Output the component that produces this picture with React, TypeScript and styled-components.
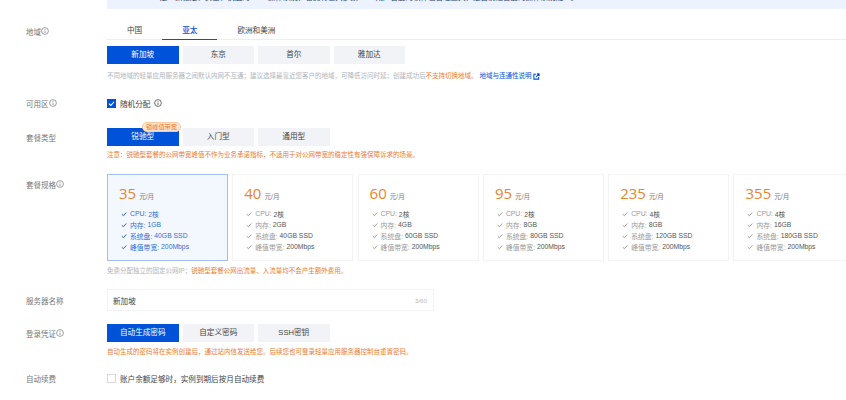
import React from "react";
import styled, { createGlobalStyle } from "styled-components";

const Global = createGlobalStyle`
  html, body { margin: 0; padding: 0; background: #fff; overflow: hidden; }
  body { font-family: "Liberation Sans", "Noto Sans CJK SC", sans-serif; color: #333; width: 846px; height: 400px; }
`;

const Page = styled.div`
  width: 846px;
  height: 400px;
  overflow: hidden;
`;
const Notice = styled.div`
  margin-left: 107px;
  height: 9px;
  background: #ecf2fe;
  overflow: hidden;
  display: flex;
  align-items: flex-end;
  padding: 0 0 6px 29px;
  box-sizing: border-box;
  font-size: 7.5px;
  line-height: 10px;
  color: #2a3f6b;
  white-space: nowrap;
`;
const Row = styled.div<{ $top: number; $h?: number }>`
  display: flex;
  margin-top: ${(p) => p.$top}px;
  ${(p) => (p.$h ? `height: ${p.$h}px; align-items: center;` : "")}
`;
const Label = styled.div<{ $lh?: number }>`
  flex: none;
  width: 81px;
  padding-left: 26px;
  font-size: 7.5px;
  color: #777;
  display: flex;
  align-items: center;
  height: ${(p) => p.$lh ?? 12}px;
`;
const Content = styled.div`
  flex: 1;
  min-width: 0;
`;
const Tabs = styled.div`
  display: flex;
  height: 18px;
  border-bottom: 1px solid #eceef1;
  box-sizing: border-box;
`;
const Tab = styled.div<{ $active?: boolean }>`
  padding: 0 20px;
  font-size: 7.6px;
  line-height: 17px;
  height: 18px;
  box-sizing: border-box;
  color: ${(p) => (p.$active ? "#0052d9" : "#444")};
  font-weight: ${(p) => (p.$active ? 500 : 400)};
  border-bottom: ${(p) => (p.$active ? "1px solid #0052d9" : "none")};
`;
const Buttons = styled.div<{ $top?: number }>`
  display: flex;
  gap: 4px;
  margin-top: ${(p) => p.$top ?? 0}px;
`;
const Btn = styled.div<{ $active?: boolean }>`
  position: relative;
  width: 71.5px;
  height: 18px;
  line-height: 18px;
  text-align: center;
  font-size: 7.6px;
  color: ${(p) => (p.$active ? "#fff" : "#444")};
  background: ${(p) => (p.$active ? "#0052d9" : "#f1f3f6")};
`;
const Badge = styled.span`
  position: absolute;
  left: 35px;
  top: -6px;
  width: 39px;
  height: 10px;
  box-sizing: border-box;
  border: 1px solid #fbc9a0;
  background: #fde3d0;
  border-radius: 6px;
  color: #ee7a22;
  font-size: 6.2px;
  line-height: 8px;
  text-align: center;
  white-space: nowrap;
`;
const Hint = styled.div<{ $top: number; $warn?: boolean }>`
  margin-top: ${(p) => p.$top}px;
  height: 10px;
  font-size: 6.5px;
  line-height: 10px;
  color: ${(p) => (p.$warn ? "#ed7b2f" : "#b0b3b8")};
  white-space: nowrap;
  display: flex;
  align-items: center;
`;
const Warn = styled.span`
  color: #ed7b2f;
`;
const LinkText = styled.span`
  color: #0052d9;
  margin-left: 2px;
  margin-right: 1px;
`;
const Check = styled.span<{ $on?: boolean }>`
  width: 9px;
  height: 9px;
  box-sizing: border-box;
  flex: none;
  display: inline-flex;
  align-items: center;
  justify-content: center;
  background: ${(p) => (p.$on ? "#0052d9" : "#fff")};
  border: 1px solid ${(p) => (p.$on ? "#0052d9" : "#d8dade")};
`;
const CheckRow = styled.div`
  display: flex;
  align-items: center;
  height: 12px;
  font-size: 7.6px;
  color: #444;
`;
const CheckText = styled.span`
  margin-left: 4px;
  margin-right: 4px;
`;
const Cards = styled.div`
  display: flex;
  gap: 4.3px;
`;
const Card = styled.div<{ $active?: boolean }>`
  flex: none;
  width: 121px;
  height: 87px;
  box-sizing: border-box;
  padding: 8px 0 0 11px;
  background: ${(p) => (p.$active ? "#f3f8ff" : "#fff")};
  border: 1px solid ${(p) => (p.$active ? "#a3bfe8" : "#f3f3f4")};
`;
const PriceLine = styled.div`
  display: flex;
  align-items: baseline;
  height: 20px;
  line-height: 20px;
`;
const Price = styled.span`
  font-family: "Open Sans", sans-serif;
  font-size: 15px;
  color: #e8842f;
`;
const Unit = styled.span`
  font-size: 6.6px;
  color: #777;
  margin-left: 3px;
`;
const Specs = styled.ul`
  list-style: none;
  margin: 5px 0 0;
  padding: 0 0 0 2px;
`;
const Spec = styled.li<{ $active?: boolean }>`
  display: flex;
  align-items: center;
  height: 11px;
  font-size: 6.8px;
  white-space: nowrap;
  color: ${(p) => (p.$active ? "#2f6fd8" : "#555")};
  & > svg { margin-right: 3px; flex: none; }
`;
const SpecKey = styled.span<{ $active?: boolean }>`
  color: ${(p) => (p.$active ? "#2f6fd8" : "#999")};
  margin-right: 2px;
`;
const InputBox = styled.div`
  width: 327px;
  height: 22px;
  box-sizing: border-box;
  border: 1px solid #f3f3f4;
  padding: 0 6px 0 5px;
  display: flex;
  align-items: center;
  justify-content: space-between;
  font-size: 7.6px;
  color: #444;
`;
const Counter = styled.span`
  font-size: 6.2px;
  color: #bbb;
`;

const Info = ({ color = "#777" }: { color?: string }) => (
  <svg width="8" height="8" viewBox="0 0 16 16" fill="none" stroke={color} strokeWidth="1.4">
    <circle cx="8" cy="8" r="6.8" />
    <path d="M8 7v5M8 4v1.6" />
  </svg>
);
const Tick = ({ color, size = 6 }: { color: string; size?: number }) => (
  <svg width={size} height={size} viewBox="0 0 16 16" fill="none" stroke={color} strokeWidth="2.4">
    <path d="M2 8.5 6.5 12.5 14 4" />
  </svg>
);
const External = () => (
  <svg width="7" height="7" viewBox="0 0 16 16" fill="none" stroke="#0052d9" strokeWidth="2.4">
    <path d="M13 9v5H2V3h5M9 2h5v5M14 2 7 9" />
  </svg>
);

const plans = [
  { price: 35, cpu: 2, mem: "1GB", disk: "40GB" },
  { price: 40, cpu: 2, mem: "2GB", disk: "40GB" },
  { price: 60, cpu: 2, mem: "4GB", disk: "60GB" },
  { price: 95, cpu: 2, mem: "8GB", disk: "80GB" },
  { price: 235, cpu: 4, mem: "8GB", disk: "120GB" },
  { price: 355, cpu: 4, mem: "16GB", disk: "180GB" },
];

const App = () => (
  <Page>
    <Global />
    <Notice>Debian是一款稳定、安全、快速的Linux操作系统，它拥有巨大多数Linux用户喜爱的软件包管理工具，是目前最喜爱的操作系统之一。</Notice>
    <Row $top={13}>
      <Label $lh={18}>地域<Info /></Label>
      <Content>
        <Tabs>
          <Tab>中国</Tab>
          <Tab $active>亚太</Tab>
          <Tab>欧洲和美洲</Tab>
        </Tabs>
        <Buttons $top={6}>
          <Btn $active>新加坡</Btn>
          <Btn>东京</Btn>
          <Btn>首尔</Btn>
          <Btn>雅加达</Btn>
        </Buttons>
        <Hint $top={7}>
          不同地域的轻量应用服务器之间默认内网不互通；建议选择最靠近您客户的地域，可降低访问时延；创建成功后
          <Warn>不支持切换地域。</Warn>
          <LinkText>地域与连通性说明</LinkText>
          <External />
        </Hint>
      </Content>
    </Row>
    <Row $top={16} $h={12}>
      <Label>可用区<Info /></Label>
      <CheckRow>
        <Check $on><Tick color="#fff" size={7} /></Check>
        <CheckText>随机分配</CheckText>
        <Info color="#333" />
      </CheckRow>
    </Row>
    <Row $top={19}>
      <Label $lh={18}>套餐类型</Label>
      <Content>
        <Buttons>
          <Btn $active>锐驰型<Badge>锁峰值带宽</Badge></Btn>
          <Btn>入门型</Btn>
          <Btn>通用型</Btn>
        </Buttons>
        <Hint $top={4} $warn>注意：锐驰型套餐的公网带宽峰值不作为业务承诺指标，不适用于对公网带宽的稳定性有强保障诉求的场景。</Hint>
      </Content>
    </Row>
    <Row $top={14}>
      <Label $lh={20}>套餐规格<Info /></Label>
      <Content>
        <Cards>
          {plans.map((p, i) => {
            const on = i === 0;
            const tick = on ? "#1f4f9c" : "#999";
            return (
              <Card key={p.price} $active={on}>
                <PriceLine>
                  <Price>{p.price}</Price>
                  <Unit>元/月</Unit>
                </PriceLine>
                <Specs>
                  <Spec $active={on}><Tick color={tick} /><SpecKey $active={on}>CPU:</SpecKey>{p.cpu}核</Spec>
                  <Spec $active={on}><Tick color={tick} /><SpecKey $active={on}>内存:</SpecKey>{p.mem}</Spec>
                  <Spec $active={on}><Tick color={tick} /><SpecKey $active={on}>系统盘:</SpecKey>{p.disk} SSD</Spec>
                  <Spec $active={on}><Tick color={tick} /><SpecKey $active={on}>峰值带宽:</SpecKey>200Mbps</Spec>
                </Specs>
              </Card>
            );
          })}
        </Cards>
        <Hint $top={5}>
          免费分配独立的固定公网IP；<Warn>锐驰型套餐公网出流量、入流量均不会产生额外费用。</Warn>
        </Hint>
      </Content>
    </Row>
    <Row $top={13} $h={22}>
      <Label>服务器名称</Label>
      <InputBox>新加坡<Counter>3/60</Counter></InputBox>
    </Row>
    <Row $top={13}>
      <Label $lh={18}>登录凭证<Info /></Label>
      <Content>
        <Buttons>
          <Btn $active>自动生成密码</Btn>
          <Btn>自定义密码</Btn>
          <Btn>SSH密钥</Btn>
        </Buttons>
        <Hint $top={5} $warn>自动生成的密码将在实例创建后，通过站内信发送给您。后续您也可登录轻量应用服务器控制台重置密码。</Hint>
      </Content>
    </Row>
    <Row $top={15} $h={12}>
      <Label>自动续费</Label>
      <CheckRow>
        <Check />
        <CheckText>账户余额足够时，实例到期后按月自动续费</CheckText>
      </CheckRow>
    </Row>
  </Page>
);

export default App;
